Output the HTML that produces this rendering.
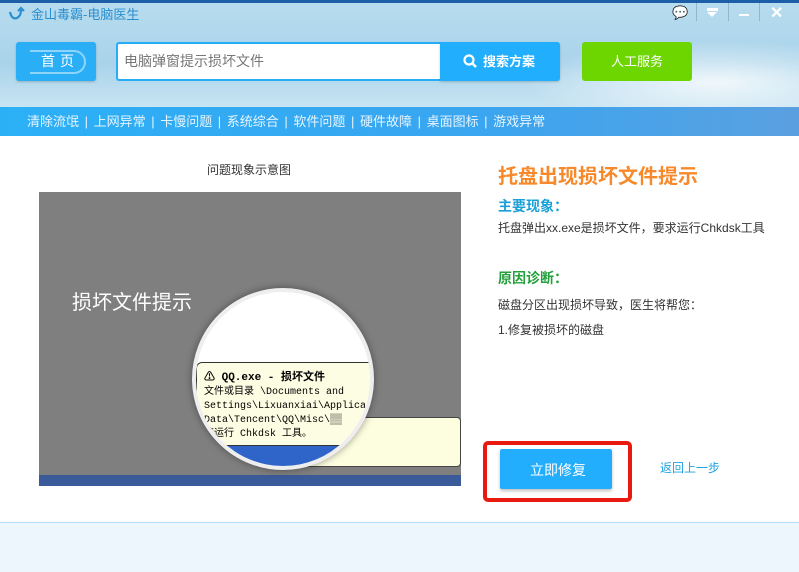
<!DOCTYPE html>
<html><head><meta charset="utf-8"><style>
*{margin:0;padding:0;box-sizing:border-box}
body{width:799px;height:572px;overflow:hidden;position:relative;font-family:"Liberation Sans","Noto Sans CJK SC",sans-serif;background:#fff}
.a{position:absolute}
.nav span.s{margin:0 5.6px}
</style></head><body>
<div class="a" style="left:0;top:0;width:799px;height:107px;background:linear-gradient(180deg,#b8dcee 0%,#a9d3ea 60%,#c8e4f2 100%)"></div>
<div class="a" style="left:0;top:0;width:799px;height:3px;background:#1c5fa8"></div>
<div class="a" style="left:520px;top:40px;width:280px;height:70px;background:radial-gradient(ellipse at 70% 60%,rgba(255,255,255,.8),rgba(255,255,255,0) 70%)"></div>
<svg class="a" style="left:8px;top:6px" width="18" height="18" viewBox="0 0 18 18"><path d="M2 6 Q4 14 9 12 Q13 10 13 4 M10 5 L13 2 L16 5" fill="none" stroke="#2a8fd0" stroke-width="2.2"/></svg>
<div class="a" style="left:31px;top:7px;font-size:13px;line-height:16px;color:#2a8fd0">金山毒霸-电脑医生</div>
<div class="a" style="left:672px;top:5px;font-size:13px;color:#fff">💬</div>
<div class="a" style="left:696px;top:3px;width:1px;height:18px;background:#8fb7cc"></div>
<div class="a" style="left:707px;top:8px;width:11px;height:3px;background:#fff"></div>
<div class="a" style="left:707px;top:12px;width:0;height:0;border-left:5px solid transparent;border-right:5px solid transparent;border-top:5px solid #fff"></div>
<div class="a" style="left:728px;top:3px;width:1px;height:18px;background:#8fb7cc"></div>
<div class="a" style="left:739px;top:14px;width:10px;height:2px;background:#fff"></div>
<div class="a" style="left:759px;top:3px;width:1px;height:18px;background:#8fb7cc"></div>
<div class="a" style="left:770px;top:3px;font-size:16px;font-weight:bold;color:#fff">✕</div>
<div class="a" style="left:16px;top:42px;width:80px;height:39px;background:#2aaef5;border-radius:3px;box-shadow:0 1px 2px rgba(0,0,0,.2)"></div>
<div class="a" style="left:30px;top:50px;width:56px;height:24px;border:2px solid #8fd4fb;border-left:none;border-radius:0 12px 12px 0"></div>
<div class="a" style="left:41px;top:53px;font-size:14px;line-height:16px;color:#fff;letter-spacing:5px">首页</div>
<div class="a" style="left:116px;top:42px;width:324px;height:39px;background:#fff;border:2px solid #27acf8;border-right:none;border-radius:3px 0 0 3px"></div>
<div class="a" style="left:124px;top:53px;font-size:14px;line-height:17px;color:#777">电脑弹窗提示损坏文件</div>
<div class="a" style="left:440px;top:42px;width:120px;height:39px;background:#21aefd;border-radius:0 3px 3px 0;box-shadow:0 1px 2px rgba(0,0,0,.2)"></div>
<svg class="a" style="left:463px;top:54px" width="15" height="15" viewBox="0 0 15 15"><circle cx="6" cy="6" r="4.5" fill="none" stroke="#fff" stroke-width="2.2"/><path d="M9.5 9.5 L13 13" stroke="#fff" stroke-width="2.5"/></svg>
<div class="a" style="left:483px;top:54px;font-size:13px;line-height:15px;font-weight:bold;color:#fff">搜索方案</div>
<div class="a" style="left:582px;top:42px;width:110px;height:39px;background:#6dd600;border-radius:3px"></div>
<div class="a" style="left:611px;top:54px;font-size:13px;line-height:15px;color:#fff">人工服务</div>
<div class="a" style="left:0;top:107px;width:799px;height:29px;background:linear-gradient(90deg,#2bb0f6,#3aa5f0 60%,#5aa0e0)"></div>
<div class="a nav" style="left:27px;top:114px;font-size:13px;line-height:15px;color:#e6f5ff;white-space:nowrap">清除流氓<span class="s">|</span>上网异常<span class="s">|</span>卡慢问题<span class="s">|</span>系统综合<span class="s">|</span>软件问题<span class="s">|</span>硬件故障<span class="s">|</span>桌面图标<span class="s">|</span>游戏异常</div>
<div class="a" style="left:0;top:522px;width:799px;height:50px;background:#eef6fd;border-top:1px solid #b0dcf8"></div>
<div class="a" style="left:207px;top:161px;font-size:12px;color:#333">问题现象示意图</div>
<div class="a" style="left:39px;top:192px;width:422px;height:294px;background:#7f7f7f;overflow:hidden">
<div class="a" style="left:33px;top:94px;font-size:20px;color:#fff">损坏文件提示</div>
<div class="a" style="left:0;top:283px;width:422px;height:11px;background:#3a5a9a"></div>
<div class="a" style="left:232px;top:225px;width:190px;height:50px;background:#fdfde0;border:1px solid #444;border-radius:4px"></div>
<div class="a" style="left:153px;top:96px;width:182px;height:182px;border-radius:50%;background:#fff;border:4px solid #eee;box-shadow:0 0 8px rgba(0,0,0,.4);overflow:hidden">
<div class="a" style="left:0;top:70px;width:190px;height:84px;background:#fdfde3;border:1.5px solid #333;border-radius:6px"></div>
<div class="a" style="left:0;top:154px;width:190px;height:30px;background:#2f64c8"></div>
<div class="a" style="left:8px;top:76px;font-size:11px;font-weight:bold;color:#000;font-family:'Liberation Mono','Noto Sans CJK SC',monospace">⚠ QQ.exe - 损坏文件</div>
<div class="a" style="left:8px;top:94px;font-size:10px;line-height:14px;color:#000;font-family:'Liberation Mono','Noto Sans CJK SC',monospace;white-space:pre">文件或目录 \Documents and
Settings\Lixuanxiai\Applica
Data\Tencent\QQ\Misc\▒▒
请运行 Chkdsk 工具。</div>
</div></div>
<div class="a" style="left:498px;top:160px;font-size:20px;font-weight:bold;color:#f7892a">托盘出现损坏文件提示</div>
<div class="a" style="left:498px;top:196px;font-size:14px;font-weight:bold;color:#1aa0d8">主要现象：</div>
<div class="a" style="left:498px;top:219px;font-size:12px;color:#333">托盘弹出xx.exe是损坏文件，要求运行Chkdsk工具</div>
<div class="a" style="left:498px;top:268px;font-size:14px;font-weight:bold;color:#22a03a">原因诊断：</div>
<div class="a" style="left:498px;top:296px;font-size:12px;color:#333">磁盘分区出现损坏导致，医生将帮您：</div>
<div class="a" style="left:498px;top:321px;font-size:12px;color:#333">1.修复被损坏的磁盘</div>
<div class="a" style="left:483px;top:441px;width:149px;height:61px;border:4px solid #e8190f;border-radius:5px"></div>
<div class="a" style="left:500px;top:449px;width:112px;height:40px;background:#22aefd;border-radius:2px;box-shadow:0 2px 3px rgba(0,0,0,.25)"></div>
<div class="a" style="left:530px;top:460px;font-size:14px;color:#fff">立即修复</div>
<div class="a" style="left:660px;top:459px;font-size:12px;color:#1ea0e0">返回上一步</div>
</body></html>
